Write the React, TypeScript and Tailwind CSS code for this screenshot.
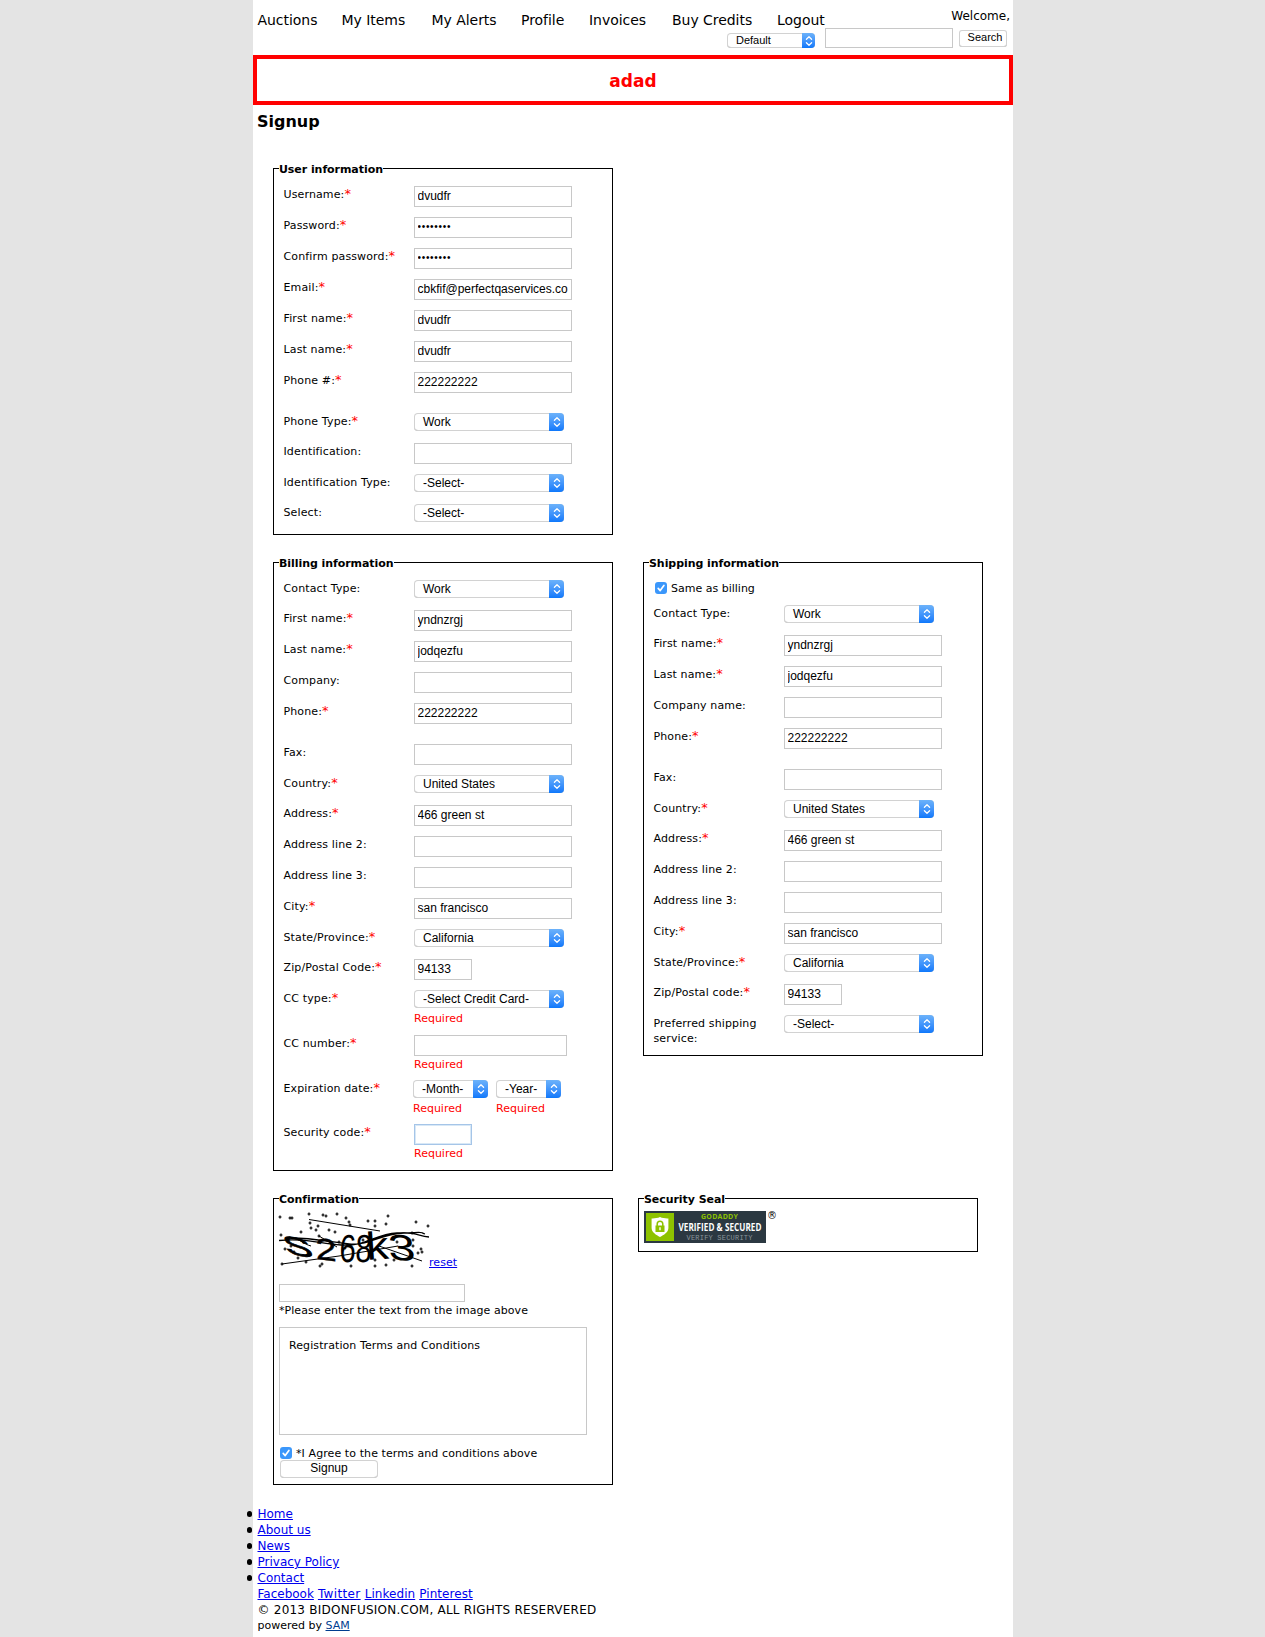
import React from "react";

const ui = "font-['Liberation_Sans',Arial,sans-serif]";

function Arrows() {
  return (
    <svg viewBox="0 0 8 12" className="h-[12px] w-[8px]" fill="none" stroke="#fff" strokeWidth="1.25" strokeLinecap="round" strokeLinejoin="round">
      <path d="M1.4 4.3 4 1.7l2.6 2.6M1.4 7.7 4 10.3l2.6-2.6" />
    </svg>
  );
}

function Select({ value, width = "w-[150px]" }: { value: string; width?: string }) {
  return (
    <div
      className={`${ui} ${width} flex h-[18px] shrink-0 items-stretch overflow-hidden rounded-[4px] text-[12px] leading-[18px] tracking-normal shadow-[inset_0_0_0_1px_#d2d2d2,inset_0_-1px_0_#b4b4b4]`}
    >
      <span className="flex-1 pl-[9px] whitespace-nowrap">{value}</span>
      <span className="flex w-[15px] items-center justify-center bg-linear-to-b from-[#6cb2fa] to-[#0c78fb]">
        <Arrows />
      </span>
    </div>
  );
}

function Input({ value = "", type = "text", width = "w-[158px]", focus = false }: { value?: string; type?: string; width?: string; focus?: boolean }) {
  return (
    <input
      type={type}
      defaultValue={value}
      className={`${ui} ${width} block h-[21px] rounded-none border bg-white pr-[3px] pl-[2.5px] pb-[2px] outline-none ${
        type === "password" ? "text-[10px] tracking-[0.7px]" : "text-[12px] tracking-normal"
      } ${focus ? "border-[#a5c5e8] shadow-[inset_0_0_0_1px_#d8e8f6]" : "border-[#c8c8c8]"}`}
    />
  );
}

function Required() {
  return <div className="h-[15px] text-[11px] leading-[15px] tracking-normal text-[#f00]">Required</div>;
}

function Row({ label, req = false, height = "h-[31px]", children }: { label: string; req?: boolean; height?: string; children: React.ReactNode }) {
  return (
    <div className={`flex ${height}`}>
      <label className="w-[131px] shrink-0 pt-px pl-[0.5px] leading-[15px] tracking-[0.13px]">
        <span className="block w-[125px]">
          {label}
          {req && <span className="text-[13px] leading-[10px] text-[#f00]">*</span>}
        </span>
      </label>
      <div>{children}</div>
    </div>
  );
}

function Fieldset({ title, className, children }: { title: string; className: string; children: React.ReactNode }) {
  return (
    <fieldset className={`w-[340px] shrink-0 border border-black pl-[5px] text-[11px] tracking-[0.06px] ${className}`}>
      <legend className="h-[15px] pt-[2px] text-[11px] leading-[13px] font-bold tracking-[-0.06px]">{title}</legend>
      {children}
    </fieldset>
  );
}

function Check() {
  return (
    <span className="flex h-[12px] w-[12px] shrink-0 items-center justify-center rounded-[3px] bg-[#3b97fb]">
      <svg viewBox="0 0 12 12" className="h-[12px] w-[12px]" fill="none" stroke="#fff" strokeWidth="1.7" strokeLinecap="round" strokeLinejoin="round">
        <path d="M3.2 6.4 5.2 8.6 8.9 3.4" />
      </svg>
    </span>
  );
}

const S = "h-[30px]";
const TALL = "h-[41px]";

function AddressRows({ companyLabel, zipLabel }: { companyLabel: string; zipLabel: string }) {
  return (
    <>
      <Row label="Contact Type:" height={S}><Select value="Work" /></Row>
      <Row label="First name:" req><Input value="yndnzrgj" /></Row>
      <Row label="Last name:" req><Input value="jodqezfu" /></Row>
      <Row label={companyLabel}><Input /></Row>
      <Row label="Phone:" req height={TALL}><Input value="222222222" /></Row>
      <Row label="Fax:"><Input /></Row>
      <Row label="Country:" req height={S}><Select value="United States" /></Row>
      <Row label="Address:" req><Input value="466 green st" /></Row>
      <Row label="Address line 2:"><Input /></Row>
      <Row label="Address line 3:"><Input /></Row>
      <Row label="City:" req><Input value="san francisco" /></Row>
      <Row label="State/Province:" req height={S}><Select value="California" /></Row>
      <Row label={zipLabel} req><Input value="94133" width="w-[58px]" /></Row>
    </>
  );
}

const specks: [number, number][] = [
  [1, 5], [11, 6], [13, 6], [30, 2], [44, 3], [47, 4], [58, 2], [67, 6], [70, 10], [71, 13], [89, 9], [96, 9], [96, 14], [109, 4],
  [107, 12], [137, 10], [149, 14], [31, 11], [39, 14], [32, 16], [37, 18], [22, 20], [50, 18], [56, 20], [40, 24], [2, 23], [133, 21],
  [6, 37], [15, 40], [12, 34], [134, 28], [134, 34], [142, 37], [139, 41], [143, 40], [19, 46], [27, 50], [3, 52], [43, 52], [41, 54],
  [72, 54], [96, 48], [96, 54], [115, 48], [107, 53], [133, 54], [118, 30], [66, 36], [60, 30], [84, 28],
];

function Captcha() {
  return (
    <svg viewBox="0 0 150 55" className="h-[55px] w-[150px] overflow-visible" stroke="#000" fill="none">
      {specks.map(([x, y], i) => (
        <path key={i} d={`M${x - 1.5} ${y}h3M${x} ${y - 1.5}v3`} strokeWidth="1.2" />
      ))}
      <g fill="#000" stroke="none" fontFamily="Liberation Sans, Arial, sans-serif" fontSize="28">
        <text transform="matrix(1.5 .3 .35 .95 8 41)" stroke="#000" strokeWidth=".8">S</text>
        <text transform="matrix(1.35 .16 .05 1.1 37 47)" stroke="#000" strokeWidth=".3">2</text>
        <text transform="matrix(1.05 0 -.06 1.4 60 50)">6</text>
        <text transform="matrix(1.05 0 -.06 1.4 76 50)">8</text>
        <text transform="matrix(1.6 -.1 .1 1.4 88 48)">k</text>
        <text transform="matrix(1.75 .16 .1 1.3 110 47)">3</text>
      </g>
      <path d="M30 7.5 101 19M3 52 60 44 119 34M100 34l43 15" strokeWidth="1" />
      <path d="M0 28.5C25 26 38 31 62 33S96 22 118 21s20 3 32 4M12 26C35 26 50 30 70 32s30-10 55-11 14-1 21 1" strokeWidth="1.3" />
      <path d="M10 25c12 2 14 7 22 9M40 24l18 11" strokeWidth="1" />
    </svg>
  );
}

function Seal() {
  return (
    <div className="flex h-[32px] w-[122px] bg-[#2b3841] p-[2px]">
      <div className="flex h-[28px] w-[28px] shrink-0 items-center justify-center bg-[#8dc200]">
        <svg viewBox="0 0 18 20" className="h-[20px] w-[18px]">
          <path d="M9 0C6.5 1.2 3.5 1.5.6 1.4V11c0 4.3 4.6 7 8.4 9 3.8-2 8.4-4.7 8.4-9V1.4C14.500 1.500 11.500 1.200 9 0z" fill="#fff" />
          <path d="M6.2 9V7a2.8 2.8 0 0 1 5.6 0v2" fill="none" stroke="#8dc200" strokeWidth="1.5" />
          <rect x="4.5" y="8.5" width="9" height="6.5" fill="#8dc200" />
          <path d="M9 10.2v3" stroke="#fff" strokeWidth="1.4" />
        </svg>
      </div>
      <svg viewBox="0 0 90 28" className="h-[28px] w-[90px] overflow-visible">
        <text x="27" y="6" fontSize="7" fontWeight="bold" fill="#8dc200" textLength="37" fontFamily="Open Sans, sans-serif">GODADDY</text>
        <text x="4.5" y="17.5" fontSize="10" fontWeight="bold" fill="#fff" textLength="83" lengthAdjust="spacingAndGlyphs" fontFamily="Open Sans, sans-serif">VERIFIED &amp; SECURED</text>
        <text x="12.5" y="26.5" fontSize="7" fill="#8a949a" textLength="66" fontFamily="Liberation Mono, monospace">VERIFY SECURITY</text>
      </svg>
    </div>
  );
}

const nav: [string, string][] = [
  ["Auctions", "w-[84px]"],
  ["My Items", "w-[90px]"],
  ["My Alerts", "w-[89.5px]"],
  ["Profile", "w-[68px]"],
  ["Invoices", "w-[83px]"],
  ["Buy Credits", "w-[105px]"],
  ["Logout", "w-[60px]"],
];

export default function App() {
  return (
    <div className="flex h-[1637px] overflow-hidden bg-[#e4e4e4] font-['DejaVu_Sans',Verdana,sans-serif] text-black">
      <div className="ml-[253px] w-[760px] bg-white">
        <header className="h-[55px]">
          <div className="flex h-[28px] justify-between pr-[3px] pl-[4.5px]">
            <nav className="flex pt-[11px] text-[14px] leading-[18px] tracking-[-0.04px]">
              {nav.map(([name, w]) => (
                <a key={name} className={`${w} whitespace-nowrap`}>{name}</a>
              ))}
            </nav>
            <span className="pt-[8px] text-[12px] leading-[16px]">Welcome,</span>
          </div>
          <div className={`${ui} flex justify-end pr-[6px] text-[11px]`}>
            <div className="mt-[5px] mr-[10px] flex h-[15px] w-[88px] overflow-hidden rounded-[4px] leading-[15px] shadow-[inset_0_0_0_1px_#d2d2d2,inset_0_-1px_0_#b4b4b4]">
              <span className="flex-1 pl-[9px]">Default</span>
              <span className="flex w-[13px] items-center justify-center bg-linear-to-b from-[#6cb2fa] to-[#0c78fb]"><Arrows /></span>
            </div>
            <input className="h-[20px] w-[128px] border border-[#c8c8c8] outline-none" />
            <button className="mt-[2px] ml-[6px] h-[17px] w-[48px] rounded-[3px] pb-[3px] pl-[4px] leading-[14px] shadow-[inset_0_0_0_1px_#d2d2d2,inset_0_-1px_0_#b8b8b8]">Search</button>
          </div>
        </header>

        <div className="flex h-[50px] items-center justify-center border-4 border-[#f00] pt-px text-[17px] leading-[20px] font-bold text-[#f00]">adad</div>

        <h1 className="h-[56px] pt-[7px] pl-[4px] text-[16px] leading-[20px] font-bold">Signup</h1>

        <div className="pl-[20px]">
          <Fieldset title="User information" className="h-[374px]">
            <div className="pt-[10px] pl-[4px]">
              <Row label="Username:" req><Input value="dvudfr" /></Row>
              <Row label="Password:" req><Input type="password" value="password" /></Row>
              <Row label="Confirm password:" req><Input type="password" value="password" /></Row>
              <Row label="Email:" req><Input value="cbkfif@perfectqaservices.co" /></Row>
              <Row label="First name:" req><Input value="dvudfr" /></Row>
              <Row label="Last name:" req><Input value="dvudfr" /></Row>
              <Row label="Phone #:" req height={TALL}><Input value="222222222" /></Row>
              <Row label="Phone Type:" req height={S}><Select value="Work" /></Row>
              <Row label="Identification:"><Input /></Row>
              <Row label="Identification Type:" height={S}><Select value="-Select-" /></Row>
              <Row label="Select:" height={S}><Select value="-Select-" /></Row>
            </div>
          </Fieldset>

          <div className="mt-[20px] flex items-start gap-[30px]">
            <Fieldset title="Billing information" className="h-[616px]">
              <div className="pt-[10px] pl-[4px]">
                <AddressRows companyLabel="Company:" zipLabel="Zip/Postal Code:" />
                <Row label="CC type:" req height="h-[45px]">
                  <Select value="-Select Credit Card-" />
                  <div className="pt-[3px]"><Required /></div>
                </Row>
                <Row label="CC number:" req height="h-[45px]">
                  <Input width="w-[153px]" />
                  <div className="pt-px"><Required /></div>
                </Row>
                <Row label="Expiration date:" req height="h-[44px]">
                  <div className="-ml-px flex gap-[8px]">
                    <div>
                      <Select value="-Month-" width="w-[75px]" />
                      <div className="pt-[3px]"><Required /></div>
                    </div>
                    <div>
                      <Select value="-Year-" width="w-[65px]" />
                      <div className="pt-[3px]"><Required /></div>
                    </div>
                  </div>
                </Row>
                <Row label="Security code:" req>
                  <Input width="w-[58px]" focus />
                  <div className="pt-px"><Required /></div>
                </Row>
              </div>
            </Fieldset>
            <Fieldset title="Shipping information" className="h-[501px]">
              <div className="pl-[4px]">
                <div className="flex h-[35px] gap-[4px] pt-[11px] pl-[2px] leading-[15px] tracking-normal">
                  <div className="pt-px"><Check /></div>
                  <span>Same as billing</span>
                </div>
                <AddressRows companyLabel="Company name:" zipLabel="Zip/Postal code:" />
                <Row label="Preferred shipping service:"><Select value="-Select-" /></Row>
              </div>
            </Fieldset>
          </div>

          <div className="mt-[20px] flex items-start gap-[25px]">
            <Fieldset title="Confirmation" className="h-[294px]">
              <div className="flex h-[78px] pt-[6px]">
                <Captcha />
                <a className="pt-[43px] leading-[15px] text-[#00e] underline">reset</a>
              </div>
              <input className="block h-[18px] w-[186px] border border-[#c8c8c8] outline-none" />
              <p className="h-[25px] pt-px leading-[15px]">*Please enter the text from the image above</p>
              <div className="h-[108px] w-[308px] border border-[#c8c8c8] pt-[10px] pl-[9px] leading-[15px] tracking-[0.09px]">Registration Terms and Conditions</div>
              <div className="flex h-[25px] gap-[4px] pt-[11px] pl-px leading-[15px] tracking-[0.09px]">
                <div className="pt-px"><Check /></div>
                <span className="whitespace-nowrap">*I Agree to the terms and conditions above</span>
              </div>
              <button className={`${ui} ml-px block h-[18px] w-[98px] rounded-[4px] pb-[2px] text-[12px] leading-[15px] tracking-normal shadow-[inset_0_0_0_1px_#d2d2d2,inset_0_-1px_0_#b8b8b8]`}>Signup</button>
            </Fieldset>
            <Fieldset title="Security Seal" className="h-[61px]">
              <div className="flex gap-px pt-[5px]">
                <Seal />
                <span className="text-[10px] leading-[9px]">®</span>
              </div>
            </Fieldset>
          </div>
        </div>

        <footer className="pt-[21px] pl-[4.5px] text-[12px] leading-[16px]">
          <ul>
            {["Home", "About us", "News", "Privacy Policy", "Contact"].map((t) => (
              <li key={t} className="-ml-[11px] flex items-center gap-[5.5px]">
                <span className="h-[5.5px] w-[5.5px] rounded-full bg-black" />
                <a className="text-[#00e] underline">{t}</a>
              </li>
            ))}
          </ul>
          <div className="flex gap-[4px] text-[#00e]">
            <a className="underline">Facebook</a>
            <a className="tracking-[0.36px] underline">Twitter</a>
            <a className="tracking-[0.06px] underline">Linkedin</a>
            <a className="tracking-[0.06px] underline">Pinterest</a>
          </div>
          <div className="tracking-[0.23px]">© 2013 BIDONFUSION.COM, ALL RIGHTS RESERVERED</div>
          <div className="text-[11px]">powered by <a className="text-[#003d8f] underline">SAM</a></div>
        </footer>
      </div>
    </div>
  );
}
